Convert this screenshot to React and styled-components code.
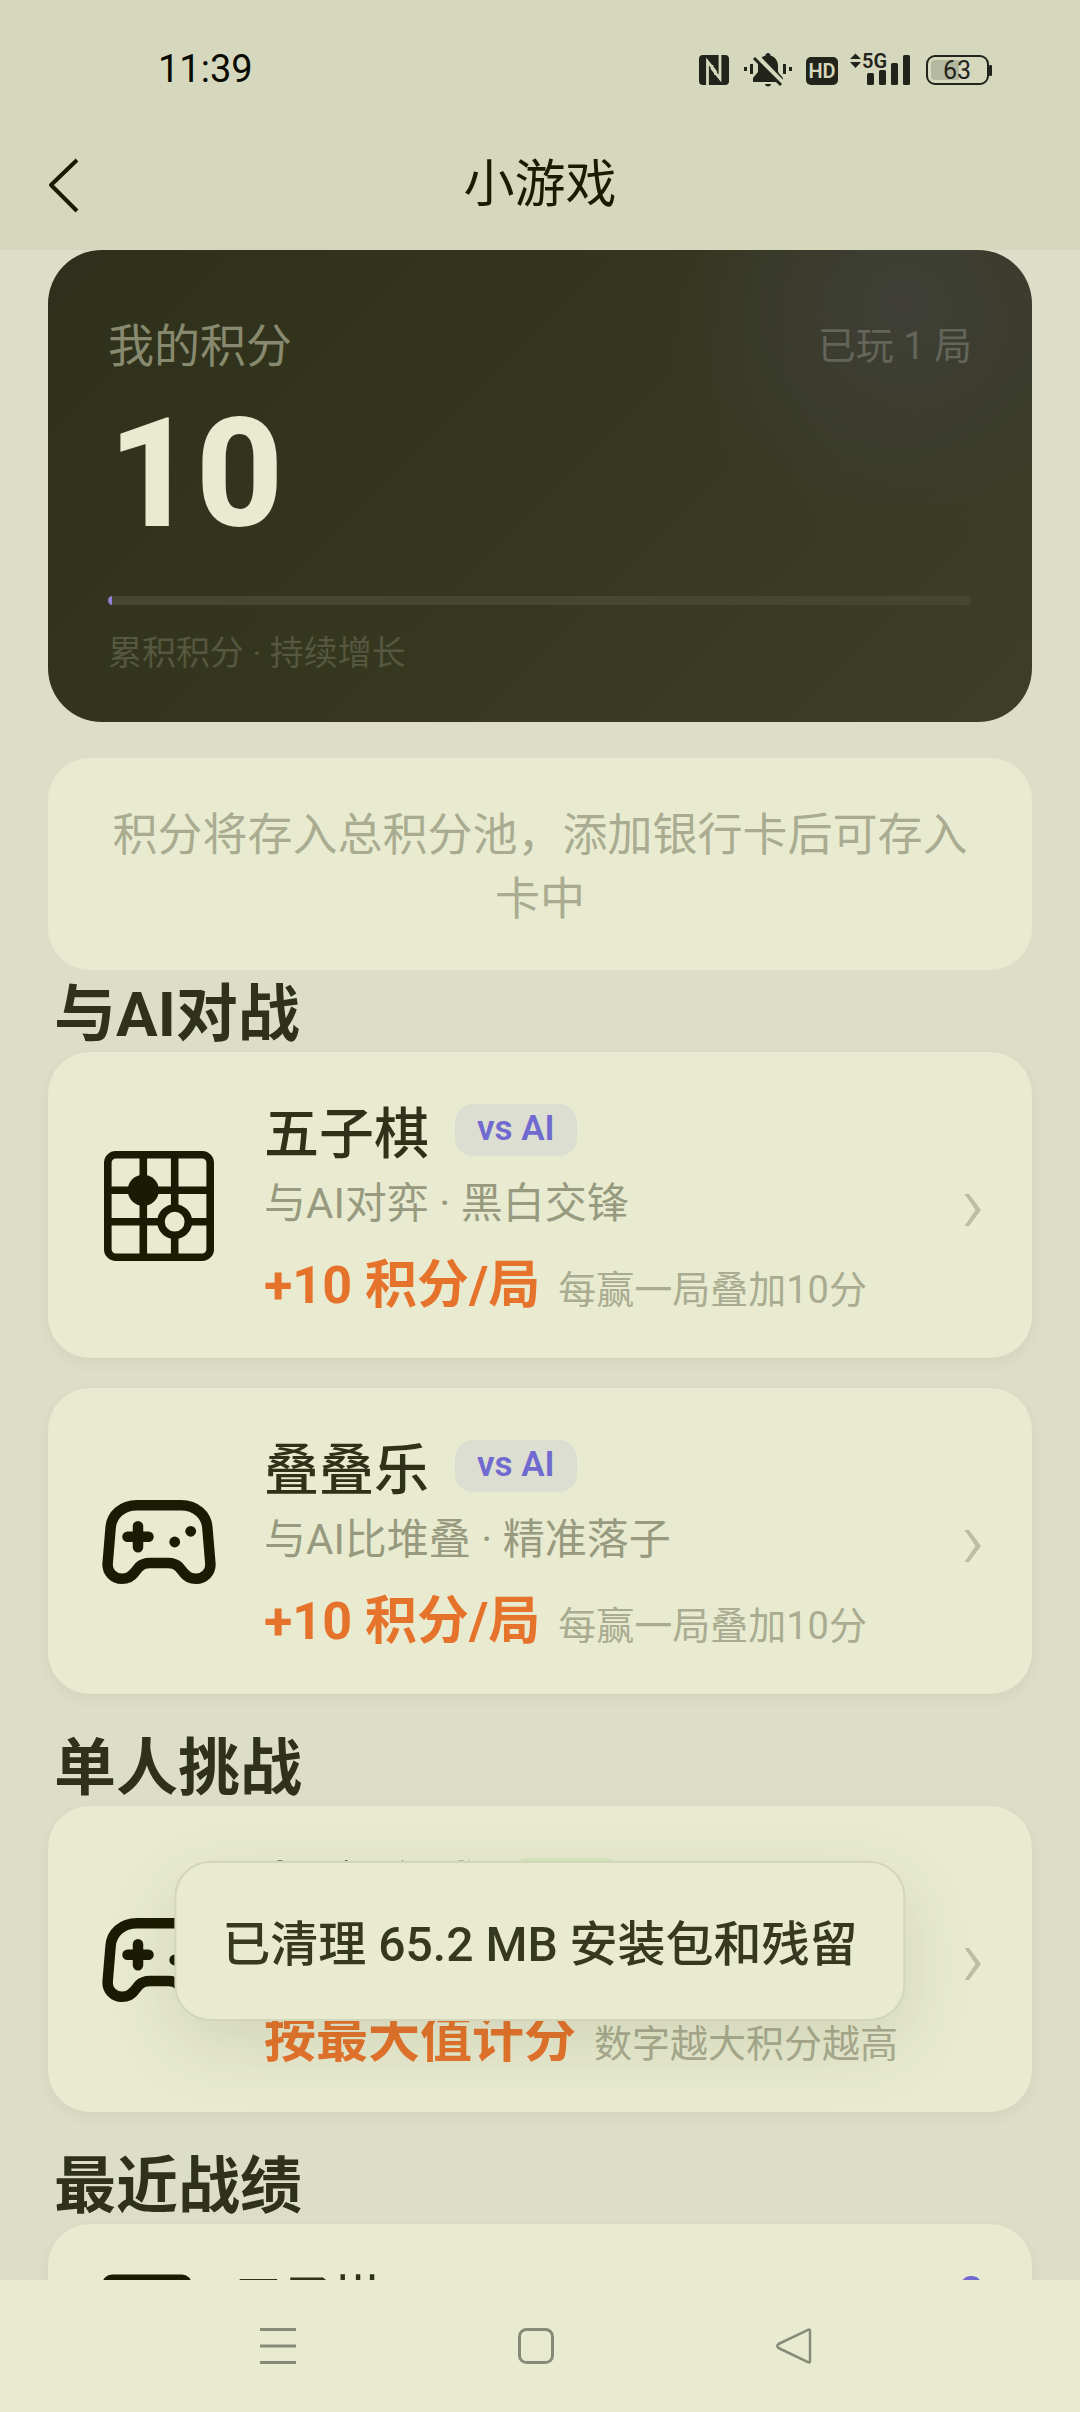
import React from "react";
import styled, { createGlobalStyle } from "styled-components";

const sans = `Roboto, "Noto Sans CJK SC", sans-serif`;

const GlobalStyle = createGlobalStyle`
  * { box-sizing: border-box; }
  html, body, #root { height: 100%; }
  body { margin: 0; background: #dcdec8; font-family: ${sans}; color: #2f3119; }
  button { font: inherit; color: inherit; background: none; border: 0; padding: 0; cursor: pointer; }
  h1, h2, h3, p { margin: 0; }
  svg { display: block; }
`;

const Screen = styled.div`
  height: 100vh;
  display: flex;
  flex-direction: column;
  overflow: hidden;
`;

const TopArea = styled.header`
  flex: none;
  background: #d5d8bc;
`;

const StatusBar = styled.div`
  height: 118px;
  padding: 20px 87px 0 158px;
  display: flex;
  align-items: center;
  justify-content: space-between;
`;

const Clock = styled.time`
  font-size: 38px;
  line-height: 48px;
  color: #0a0b02;
`;

const StatusIcons = styled.svg`
  width: 296px;
  height: 40px;
`;

const TitleBar = styled.div`
  height: 132px;
  padding: 2px 42px 0;
  display: grid;
  grid-template-columns: 60px 1fr 60px;
  align-items: center;
`;

const BackButton = styled.button`
  width: 60px;
  height: 60px;
`;

const PageTitle = styled.h1`
  font-size: 51px;
  line-height: 72px;
  font-weight: 400;
  text-align: center;
  color: #191b03;
`;

const Content = styled.main`
  flex: 1;
  min-height: 0;
  overflow: hidden;
  padding: 0 48px;
`;

const ScoreCard = styled.section`
  padding: 66px 60px 45px;
  border-radius: 54px;
  background:
    radial-gradient(circle 240px at 87% 12%, #3f3f38 0%, rgba(63, 63, 56, 0) 100%),
    linear-gradient(135deg, #2f301b 0%, #34361e 45%, #3e3f27 100%);
`;

const ScoreHead = styled.div`
  display: flex;
  align-items: center;
  justify-content: space-between;
  line-height: 60px;
`;

const ScoreLabel = styled.h2`
  font-size: 46px;
  font-weight: 400;
  color: #888a6f;
`;

const Played = styled.span`
  font-size: 38px;
  color: #64655a;
`;

const Score = styled.p`
  margin-top: 8px;
  font-size: 152px;
  line-height: 180px;
  font-weight: 800;
  color: #e8ebd0;
`;

const Track = styled.div`
  height: 9px;
  margin-top: 32px;
  border-radius: 5px;
  background: #46472f;
  overflow: hidden;
`;

const Fill = styled.div`
  height: 100%;
  background: #8f80d2;
`;

const ScoreNote = styled.p`
  margin-top: 24px;
  font-size: 34px;
  line-height: 48px;
  color: #55573e;
`;

const Notice = styled.p`
  margin-top: 36px;
  padding: 46px 60px 38px;
  border-radius: 42px;
  background: #e8ebd0;
  font-size: 45px;
  line-height: 64px;
  text-align: center;
  color: #aaac91;
`;

const SectionTitle = styled.h2`
  padding: 8px 6px 0;
  font-size: 62px;
  line-height: 74px;
  font-weight: 700;
  color: #2f3119;
`;

const Card = styled.button`
  width: 100%;
  margin-bottom: 30px;
  padding: 46px 48px 44px;
  display: flex;
  align-items: center;
  gap: 42px;
  text-align: left;
  border-radius: 42px;
  background: #e8ebd0;
  box-shadow: 0 5px 14px rgba(60, 70, 20, 0.06);
`;

const CardIcon = styled.svg`
  flex: none;
  width: 126px;
  height: 126px;
`;

const CardText = styled.span`
  flex: 1;
  min-width: 0;
  display: flex;
  flex-direction: column;
`;

const NameRow = styled.span`
  display: flex;
  align-items: flex-start;
  gap: 26px;
  line-height: 72px;
`;

const Name = styled.strong`
  font-size: 55px;
  font-weight: 500;
  color: #2f3119;
`;

const Badge = styled.span`
  margin-top: 6px;
  padding: 0 22px 2px;
  border-radius: 18px;
  font-size: 35px;
  line-height: 50px;
  font-weight: 600;
  color: ${(p) => (p.$tone === "green" ? "#4fa34a" : "#7069cf")};
  background: ${(p) => (p.$tone === "green" ? "#d6e6c0" : "#dcded1")};
`;

const Desc = styled.span`
  margin-top: 6px;
  font-size: 42px;
  line-height: 56px;
  color: #989a7f;
`;

const RewardRow = styled.span`
  margin-top: 26px;
  display: flex;
  align-items: baseline;
  gap: 18px;
`;

const Reward = styled.span`
  font-size: 52px;
  line-height: 56px;
  font-weight: 700;
  color: #e6732c;
`;

const Hint = styled.span`
  font-size: 38px;
  line-height: 40px;
  color: #aaac91;
`;

const Chevron = styled.svg`
  flex: none;
  width: 24px;
  height: 48px;
`;

const RecordCard = styled.section`
  padding: 44px 48px;
  display: flex;
  align-items: flex-start;
  gap: 36px;
  border-radius: 42px;
  background: #e8ebd0;
  box-shadow: 0 5px 14px rgba(60, 70, 20, 0.06);
`;

const RecordIcon = styled(CardIcon)`
  width: 102px;
  height: 102px;
`;

const RecordName = styled.h3`
  flex: 1;
  font-size: 49px;
  line-height: 64px;
  font-weight: 500;
`;

const RecordScore = styled.span`
  font-size: 45px;
  line-height: 50px;
  font-weight: 700;
  color: #7069cf;
`;

const Toast = styled.div`
  position: fixed;
  left: 50%;
  bottom: 391px;
  transform: translateX(-50%);
  padding: 48px 46px 40px;
  white-space: nowrap;
  border: 2px solid #d3d6ba;
  border-radius: 36px;
  background: #e8ebd0;
  box-shadow: 0 24px 72px rgba(60, 70, 20, 0.13);
  font-size: 48px;
  line-height: 68px;
  font-weight: 500;
  color: #36391f;
`;

const NavBar = styled.nav`
  flex: none;
  height: 132px;
  padding-right: 8px;
  display: flex;
  justify-content: center;
  background: #e8ebd0;
`;

const NavButton = styled.button`
  width: 258px;
  display: flex;
  align-items: center;
  justify-content: center;
`;

const INK = "#191b03";

function BoardIcon({ as: Box = CardIcon }) {
  return (
    <Box viewBox="0 0 126 126" fill="none" stroke={INK} strokeWidth="7.6" aria-hidden="true">
      <rect x="11.8" y="11.8" width="102.4" height="102.4" rx="8" />
      <path d="M47.3 12V114M78.7 12V114M12 47.3H114M12 78.7H114" />
      <circle cx="47.3" cy="47.3" r="15.6" fill={INK} stroke="none" />
      <circle cx="78.7" cy="78.7" r="13.7" fill="#e8ebd0" />
    </Box>
  );
}

function GamepadIcon() {
  return (
    <CardIcon viewBox="0 0 126 126" fill="none" stroke={INK} strokeWidth="10.5" strokeLinecap="round" strokeLinejoin="round" aria-hidden="true">
      <path d="M41 26.3H85C100 26.3 110.5 36 111.4 49L114.4 85C114.8 93 108.5 99.8 100 99.8C95 99.8 90.5 97.5 87.5 93.5L83 88C80 85 76.5 84 72 84H54C49.5 84 46 85 43 88L38.5 93.5C35.5 97.5 31 99.8 26 99.8C17.5 99.8 11.2 93 11.6 85L14.6 49C15.5 36 26 26.3 41 26.3Z" />
      <path d="M42 47.2V68.2M31.5 57.7H52.5" />
      <circle cx="78.7" cy="63" r="5.4" fill={INK} stroke="none" />
      <circle cx="94.7" cy="52.3" r="5.4" fill={INK} stroke="none" />
    </CardIcon>
  );
}

function GameCard({ icon, name, badge, tone, desc, reward, hint }) {
  return (
    <Card type="button">
      {icon}
      <CardText>
        <NameRow>
          <Name>{name}</Name>
          <Badge $tone={tone}>{badge}</Badge>
        </NameRow>
        <Desc>{desc}</Desc>
        <RewardRow>
          <Reward>{reward}</Reward>
          <Hint>{hint}</Hint>
        </RewardRow>
      </CardText>
      <Chevron viewBox="0 0 24 48" fill="#bbbea5" aria-hidden="true">
        <path d="M4.500 12H9L21 28L9 44H4.500L15.500 28Z" />
      </Chevron>
    </Card>
  );
}

function SystemIcons() {
  const c = "#22231a";
  return (
    <StatusIcons viewBox="0 0 296 40" aria-label="NFC, 静音, HD, 5G, 电量 63">
      <rect x="2" y="6" width="30" height="30" rx="4" fill={c} />
      <path d="M10.500 36V12.500L18.500 22.500V26M23 6V29.500L15 19.500V16" fill="none" stroke="#d5d8bc" strokeWidth="2.800" />
      <g fill={c}>
        <path d="M71 4C72.500 4 73.500 5 73.500 6.500C78.500 8 81 12 81 17V22C81 25 86 27 86 30V33H56V30C56 27 61 25 61 22V17C61 12 63.500 8 68.500 6.500C68.500 5 69.500 4 71 4Z" />
        <path d="M68 35H74C74 36.500 72.700 37.500 71 37.500S68 36.500 68 35Z" />
        <rect x="47" y="18" width="3" height="4" />
        <rect x="53" y="15" width="3" height="10" />
        <rect x="86" y="15" width="3" height="10" />
        <rect x="92" y="18" width="3" height="4" />
      </g>
      <path d="M59 7L87 36" stroke="#d5d8bc" strokeWidth="6" />
      <path d="M57 9L84 36" stroke={c} strokeWidth="3" />
      <rect x="109" y="8" width="32" height="28" rx="5" fill={c} />
      <text x="125" y="29" textAnchor="middle" fontFamily="Roboto" fontWeight="600" fontSize="20" fill="#d5d8bc">HD</text>
      <path d="M153 10L158.500 4.500L164 10ZM153 13H164L158.500 19Z" fill={c} />
      <text x="165" y="19" fontFamily="Roboto" fontWeight="600" fontSize="20" fill={c}>5G</text>
      <g fill={c}>
        <rect x="170" y="24" width="7" height="12" rx="1.500" />
        <rect x="182" y="21" width="7" height="15" rx="1.500" />
        <rect x="194" y="14" width="7" height="22" rx="1.500" />
        <rect x="206" y="6" width="7" height="30" rx="1.500" />
      </g>
      <rect x="230" y="7" width="61" height="28" rx="8" fill="none" stroke={c} strokeWidth="2" />
      <path d="M238 11H262V31H238Q234 31 234 27V15Q234 11 238 11Z" fill="#b5b8a0" />
      <rect x="292" y="16" width="3" height="11" rx="1" fill={c} />
      <text x="260" y="30" textAnchor="middle" fontFamily="Roboto" fontSize="25" fill={c}>63</text>
    </StatusIcons>
  );
}

export default function App() {
  const progress = 0.45;
  return (
    <Screen>
      <GlobalStyle />
      <TopArea>
        <StatusBar>
          <Clock>11:39</Clock>
          <SystemIcons />
        </StatusBar>
        <TitleBar>
          <BackButton type="button" aria-label="返回">
            <svg width="60" height="60" viewBox="0 0 60 60" fill="none" stroke={INK} strokeWidth="4">
              <path d="M35 5L9 30L35 56" strokeLinejoin="round" />
            </svg>
          </BackButton>
          <PageTitle>小游戏</PageTitle>
        </TitleBar>
      </TopArea>
      <Content>
        <ScoreCard>
          <ScoreHead>
            <ScoreLabel>我的积分</ScoreLabel>
            <Played>已玩 1 局</Played>
          </ScoreHead>
          <Score>10</Score>
          <Track>
            <Fill style={{ width: `${progress}%` }} />
          </Track>
          <ScoreNote>累积积分 · 持续增长</ScoreNote>
        </ScoreCard>
        <Notice>积分将存入总积分池，添加银行卡后可存入卡中</Notice>

        <SectionTitle>与AI对战</SectionTitle>
        <GameCard icon={<BoardIcon />} name="五子棋" badge="vs AI" desc="与AI对弈 · 黑白交锋" reward="+10 积分/局" hint="每赢一局叠加10分" />
        <GameCard icon={<GamepadIcon />} name="叠叠乐" badge="vs AI" desc="与AI比堆叠 · 精准落子" reward="+10 积分/局" hint="每赢一局叠加10分" />

        <SectionTitle>单人挑战</SectionTitle>
        <GameCard icon={<GamepadIcon />} name="数字合成" badge="单人" tone="green" desc="滑动合并 · 挑战高分" reward="按最大值计分" hint="数字越大积分越高" />

        <SectionTitle>最近战绩</SectionTitle>
        <RecordCard>
          <BoardIcon as={RecordIcon} />
          <RecordName>五子棋</RecordName>
          <RecordScore>0</RecordScore>
        </RecordCard>
      </Content>
      <NavBar>
        <NavButton type="button" aria-label="最近任务">
          <svg width="38" height="38" viewBox="0 0 38 38" fill="none" stroke="#888a78" strokeWidth="3">
            <path d="M1 2.500H37M1 19H37M1 35.500H37" />
          </svg>
        </NavButton>
        <NavButton type="button" aria-label="主屏幕">
          <svg width="38" height="38" viewBox="0 0 38 38" fill="none" stroke="#888a78" strokeWidth="3">
            <rect x="2.500" y="2.500" width="33" height="33" rx="7" />
          </svg>
        </NavButton>
        <NavButton type="button" aria-label="返回上一页">
          <svg width="38" height="38" viewBox="0 0 38 38" fill="none" stroke="#888a78" strokeWidth="2.500" strokeLinejoin="round">
            <path d="M33 2.800Q35 1.800 35 4V34Q35 36.200 33 35.200L3.500 21Q1 19 3.500 17Z" />
          </svg>
        </NavButton>
      </NavBar>
      <Toast role="status">已清理 65.2 MB 安装包和残留</Toast>
    </Screen>
  );
}
